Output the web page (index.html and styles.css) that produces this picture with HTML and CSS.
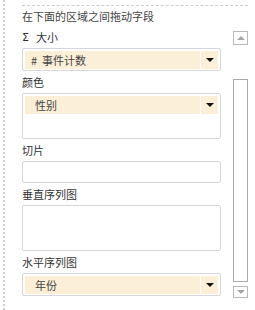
FILE: index.html
```html
<!DOCTYPE html>
<html lang="zh-CN">
<head>
    <meta charset="UTF-8">
    <meta name="viewport" content="width=device-width, initial-scale=1.0">
    <title>字段</title>
    <link rel="stylesheet" href="styles.css">
</head>
<body>
    <div class="pane">
        <div class="area">
            <div class="fields">
                <div class="hint">在下面的区域之间拖动字段</div>

                <div class="group">
                    <div class="label"><span class="sigma">Σ</span>大小</div>
                    <div class="box">
                        <div class="item">
                            <span class="name hashed"><span class="hash">#</span>事件计数</span>
                            <span class="drop"><span class="arrow"></span></span>
                        </div>
                    </div>
                </div>

                <div class="group">
                    <div class="label">颜色</div>
                    <div class="box tall">
                        <div class="item">
                            <span class="name">性别</span>
                            <span class="drop"><span class="arrow"></span></span>
                        </div>
                    </div>
                </div>

                <div class="group">
                    <div class="label">切片</div>
                    <div class="box empty"></div>
                </div>

                <div class="group">
                    <div class="label">垂直序列图</div>
                    <div class="box tall empty"></div>
                </div>

                <div class="group">
                    <div class="label">水平序列图</div>
                    <div class="box">
                        <div class="item">
                            <span class="name">年份</span>
                            <span class="drop"><span class="arrow"></span></span>
                        </div>
                    </div>
                </div>
            </div>

            <div class="scroll">
                <div class="btn"><span class="up"></span></div>
                <div class="track"></div>
                <div class="btn small"><span class="down"></span></div>
            </div>
        </div>
    </div>
</body>
</html>
```

FILE: styles.css
```css
body {
    margin: 0;
    background: #fff;
    color: #444;
    font-family: "Noto Sans CJK SC", "Noto Sans", sans-serif;
    font-size: 11px;
}
.pane {
    box-sizing: border-box;
    height: 310px;
    margin-left: 3px;
    padding-top: 5px;
    padding-left: 17px;
    border-left: 2px dotted #cfcfcf;
}
.area {
    display: flex;
    width: 226px;
    border-top: 1px dashed #cfcfcf;
}
.fields {
    width: 201px;
}
.hint {
    display: flex;
    align-items: center;
    height: 16px;
    margin-top: 2px;
    margin-bottom: 5px;
}
.group {
    margin-bottom: 3px;
}
.label {
    display: flex;
    align-items: center;
    height: 16px;
    margin-bottom: 3px;
    color: #333;
}
.sigma {
    font-family: "DejaVu Sans", sans-serif;
    margin-right: 7px;
}
.box {
    box-sizing: border-box;
    height: 23px;
    padding: 2px;
    border: 1px solid #d6d6d6;
    border-radius: 2px;
}
.box.empty {
    height: 22px;
}
.box.tall,
.box.tall.empty {
    height: 46px;
}
.item {
    display: flex;
    gap: 1px;
    height: 18px;
}
.name {
    flex: 1;
    padding-left: 10px;
    line-height: 18px;
    background: #fcefd8;
    color: #444;
}
.name.hashed {
    padding-left: 6px;
}
.hash {
    margin-right: 5px;
}
.drop {
    display: flex;
    align-items: center;
    justify-content: center;
    width: 17px;
    background: #fcefd8;
}
.arrow {
    border-left: 4px solid transparent;
    border-right: 4px solid transparent;
    border-top: 4px solid #111;
}
.scroll {
    width: 15px;
    margin-left: 12px;
    padding-top: 25px;
}
.btn {
    box-sizing: border-box;
    display: flex;
    align-items: center;
    justify-content: center;
    height: 14px;
    border: 1px solid #b8b8b8;
}
.btn.small {
    height: 12px;
    margin-top: 4px;
}
.up {
    border-left: 4px solid transparent;
    border-right: 4px solid transparent;
    border-bottom: 4px solid #a5a5a5;
}
.down {
    border-left: 4px solid transparent;
    border-right: 4px solid transparent;
    border-top: 4px solid #a5a5a5;
}
.track {
    box-sizing: border-box;
    height: 203px;
    margin-top: 34px;
    border: 1px solid #aaa;
}
```
